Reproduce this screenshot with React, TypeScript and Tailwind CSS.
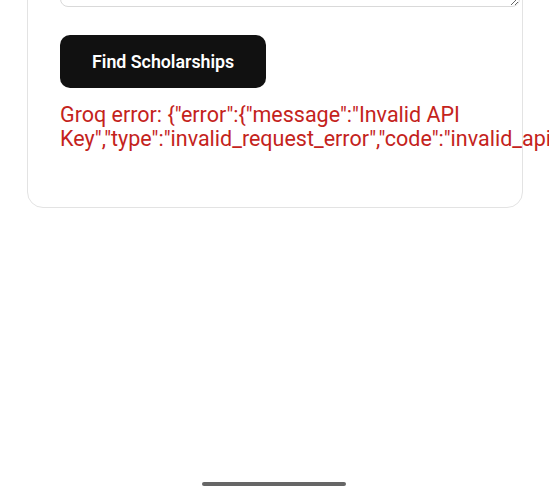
import { useState } from 'react';

const ERROR_TEXT =
  'Groq error: {"error":{"message":"Invalid API Key","type":"invalid_request_error","code":"invalid_api_key"}}';

export default function App() {
  const [profile, setProfile] = useState('');

  return (
    <div className="relative h-[500px] overflow-hidden bg-white font-['Roboto','Noto_Sans',sans-serif]">
      <div className="ml-[27px] mt-[-100px] w-[496px] rounded-2xl border border-[#e3e3e3] bg-white px-8 pb-8 pt-8">
        <textarea
          value={profile}
          onChange={e => setProfile(e.target.value)}
          className="box-content block h-[44px] w-full rounded-lg border border-[#d9d9d9] px-[14px] py-[14px] text-base outline-none"
        />
        <button className="mt-[28px] rounded-[10px] bg-[#111111] px-8 py-4 text-[17.8px] leading-[21px] font-semibold text-white">
          Find Scholarships
        </button>
        <p className="mt-[15px] mb-6 text-[21.5px] leading-6 text-[#c4231c]">{ERROR_TEXT}</p>
      </div>

      {/* gesture bar */}
      <div className="absolute bottom-[14px] left-[202px] h-1 w-[144px] rounded-full bg-[#666666]" />
    </div>
  );
}
